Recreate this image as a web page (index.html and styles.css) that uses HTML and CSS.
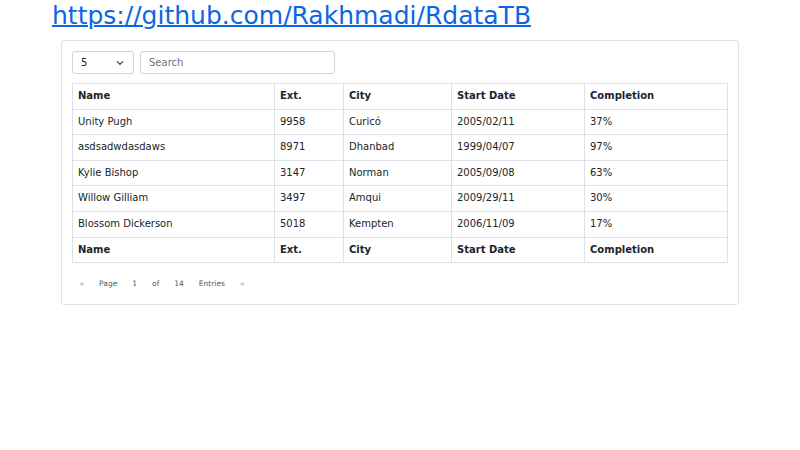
FILE: index.html
```html
<!DOCTYPE html>
<html>
<head>
<meta charset="utf-8">
<link rel="stylesheet" href="styles.css">
</head>
<body>
<div class="page">
  <a class="repo" href="#">https://github.com/Rakhmadi/RdataTB</a>
  <div class="card">
    <div class="toolbar">
      <div class="select">
        <span>5</span>
        <svg class="chev" width="8" height="6" viewBox="0 0 8 6"><path d="M1.2 1.6 L4 4.4 L6.8 1.6" fill="none" stroke="#343a40" stroke-width="1.1" stroke-linecap="round" stroke-linejoin="round"/></svg>
      </div>
      <div class="search">Search</div>
    </div>
    <table class="tbl">
      <thead>
        <tr><th class="c1">Name</th><th class="c2">Ext.</th><th class="c3">City</th><th class="c4">Start Date</th><th class="c5">Completion</th></tr>
      </thead>
      <tbody>
        <tr><td>Unity Pugh</td><td>9958</td><td>Curicó</td><td>2005/02/11</td><td>37%</td></tr>
        <tr><td>asdsadwdasdaws</td><td>8971</td><td>Dhanbad</td><td>1999/04/07</td><td>97%</td></tr>
        <tr><td>Kylie Bishop</td><td>3147</td><td>Norman</td><td>2005/09/08</td><td>63%</td></tr>
        <tr><td>Willow Gilliam</td><td>3497</td><td>Amqui</td><td>2009/29/11</td><td>30%</td></tr>
        <tr><td>Blossom Dickerson</td><td>5018</td><td>Kempten</td><td>2006/11/09</td><td>17%</td></tr>
      </tbody>
      <tfoot>
        <tr><th>Name</th><th>Ext.</th><th>City</th><th>Start Date</th><th>Completion</th></tr>
      </tfoot>
    </table>
    <div class="pager">
      <span class="arr">«</span><span>Page</span><span>1</span><span>of</span><span>14</span><span>Entries</span><span class="arr">»</span>
    </div>
  </div>
</div>
</body>
</html>
```
FILE: styles.css
```css
html, body {
  margin: 0;
  padding: 0;
  background: #fff;
}
body {
  font-family: "DejaVu Sans", sans-serif;
  color: #212529;
}
.page {
  display: flex;
  flex-direction: column;
  padding: 0 61px;
}
.repo {
  display: block;
  font-size: 25px;
  line-height: 32px;
  color: #0b66e4;
  text-decoration: underline;
  text-decoration-thickness: 1.5px;
  margin-left: -9px;
  height: 40px;
}
.card {
  border: 1px solid #dfdfdf;
  border-radius: 3px;
  padding: 10px 10px 0 10px;
  height: 253px;
}
.toolbar {
  display: flex;
  gap: 6px;
}
.select {
  height: 21px;
  border: 1px solid #ced4da;
  border-radius: 3px;
  display: flex;
  align-items: center;
  justify-content: space-between;
  padding: 0 9px 0 8px;
  width: 43px;
  font-size: 10px;
}
.chev { display: block; }
.search {
  width: 177px;
  height: 21px;
  border: 1px solid #ced4da;
  border-radius: 3px;
  padding: 0 8px;
  font-size: 10px;
  line-height: 21px;
  color: #6c757d;
}
.tbl {
  margin-top: 9px;
  width: 656px;
  border-collapse: collapse;
  font-size: 10px;
  line-height: 14.6px;
}
.tbl th, .tbl td {
  border: 1px solid #dee2e6;
  padding: 5px 5px;
  text-align: left;
  height: 14.6px;
}
.tbl th { font-weight: bold; }
.c1 { width: 191px; }
.c2 { width: 58px; }
.c3 { width: 97px; }
.c4 { width: 122px; }
.pager {
  display: flex;
  margin-top: 15px;
  font-size: 7.5px;
  line-height: 12px;
  color: #555b61;
}
.pager span { padding: 0 7.5px; }
.pager .arr { color: #8a9096; }
```
